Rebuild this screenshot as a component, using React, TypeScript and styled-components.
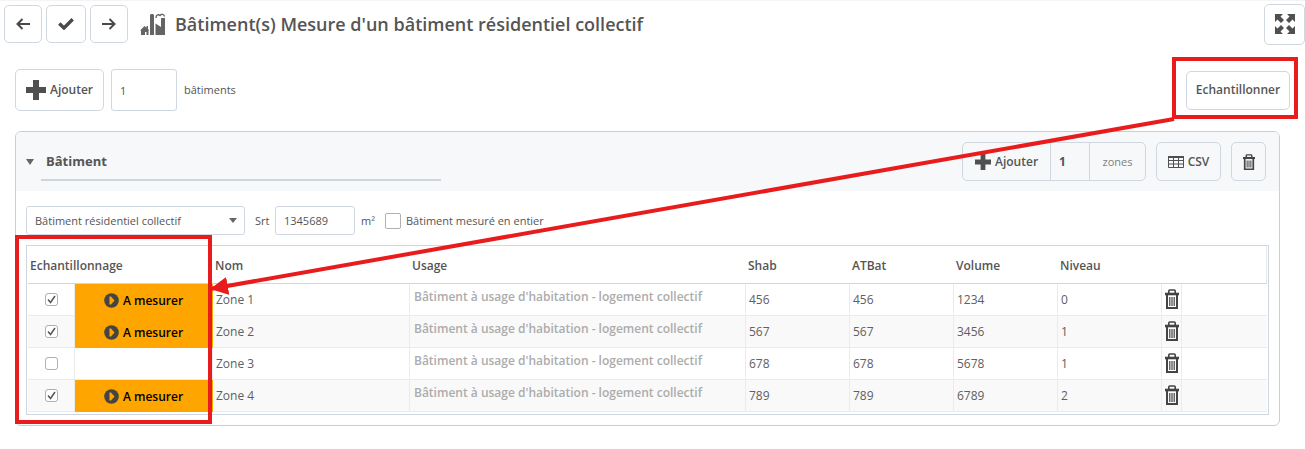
import React from "react";
import styled, { createGlobalStyle, css } from "styled-components";

const RED = "#e81c1c";
const LINE = "#d0d7e0";

const GlobalStyle = createGlobalStyle`
  *, *::before, *::after { box-sizing: border-box; }
  body {
    margin: 0;
    background: #fff;
    color: #555;
    font: 11px/16px "Open Sans", "Noto Sans", sans-serif;
  }
  button, input, select { font: inherit; color: inherit; margin: 0; }
`;

const Page = styled.div`
  position: relative;
  border-top: 1px solid #f4f4f4;
`;

const Header = styled.header`
  display: flex;
  align-items: center;
  gap: 12px;
  height: 46px;
  padding-left: 4px;
`;

const NavButtons = styled.div`
  display: flex;
  gap: 4px;
`;

const Title = styled.h1`
  display: flex;
  align-items: center;
  gap: 9px;
  flex: 1;
  margin: 0;
  font-size: 18px;
  line-height: 24px;
  font-weight: 600;
  color: #555;
`;

const Button = styled.button<{ $w?: number; $h?: number }>`
  display: inline-flex;
  align-items: center;
  justify-content: center;
  gap: 4px;
  flex: none;
  height: ${(p) => p.$h ?? 39}px;
  ${(p) => p.$w && css`width: ${p.$w}px;`}
  padding: 0;
  border: 1px solid ${LINE};
  border-radius: 5px;
  background: transparent;
  font-size: 12px;
  font-weight: 600;
  white-space: nowrap;
`;

const TextInput = styled.input<{ $w: number; $h: number }>`
  width: ${(p) => p.$w}px;
  height: ${(p) => p.$h}px;
  padding: 0 8px;
  border: 1px solid ${LINE};
  border-radius: 3px;
  background: #fff;
`;

const Toolbar = styled.div`
  display: flex;
  align-items: center;
  gap: 7px;
  height: 42px;
  margin: 22px 15px 20px;
`;

const Callout = styled.div`
  position: relative;
  display: flex;
  margin-left: auto;
`;

const CalloutFrame = styled.div<{ $inset: string; $w?: number }>`
  position: absolute;
  inset: ${(p) => p.$inset};
  ${(p) => p.$w && css`width: ${p.$w}px;`}
  border: 4px solid ${RED};
  pointer-events: none;
`;

const Card = styled.section`
  position: relative;
  margin: 0 25px 0 15px;
  border: 1px solid #c9ced4;
  border-radius: 6px;
`;

const CardHeader = styled.div`
  display: flex;
  align-items: center;
  gap: 10px;
  height: 59px;
  padding: 0 13px 0 10px;
  background: #f6f8fa;
  border-radius: 5px 5px 0 0;
`;

const Toggle = styled.button`
  display: flex;
  width: 8px;
  padding: 0;
  border: 0;
  background: none;
`;

const NameInput = styled.input`
  width: 400px;
  height: 39px;
  margin: 0 auto 0 -3px;
  padding: 0 5px;
  border: 0;
  border-bottom: 2px solid #cdd4dd;
  background: none;
  font-size: 13px;
  font-weight: 700;
`;

const Group = styled.div`
  display: flex;
  height: 39px;
  border: 1px solid ${LINE};
  border-radius: 5px;
  overflow: hidden;
`;

const GroupButton = styled.button`
  display: flex;
  align-items: center;
  gap: 4px;
  width: 87px;
  padding: 0 0 0 12px;
  border: 0;
  background: none;
  font-size: 12px;
  font-weight: 600;
`;

const GroupInput = styled.input`
  width: 40px;
  padding: 0 8px;
  border: 1px solid ${LINE};
  border-width: 0 1px;
  background: none;
  font-size: 12px;
  font-weight: 700;
`;

const GroupLabel = styled.label`
  display: flex;
  align-items: center;
  justify-content: center;
  width: 55px;
  color: #808080;
`;

const Filters = styled.div`
  display: flex;
  align-items: center;
  height: 29px;
  margin: 15px 10px 10px;
`;

const SelectBox = styled.div`
  position: relative;
  width: 219px;
  margin-right: 10px;
  svg { position: absolute; right: 8px; top: 12px; pointer-events: none; }
`;

const Select = styled.select`
  appearance: none;
  width: 100%;
  height: 29px;
  padding: 0 8px;
  border: 1px solid ${LINE};
  border-radius: 3px;
  background: #fff;
`;

const FieldLabel = styled.label`
  width: 20px;
`;

const Unit = styled.span`
  width: 30px;
  padding-left: 6px;
`;

const Check = styled.input<{ $size: number }>`
  appearance: none;
  display: block;
  flex: none;
  width: ${(p) => p.$size}px;
  height: ${(p) => p.$size}px;
  border: 1px solid #b0b0b0;
  border-radius: ${(p) => (p.$size > 14 ? 2 : 3)}px;
  background: #fff;
  &:checked {
    background: #fff
      url("data:image/svg+xml,%3Csvg xmlns='http://www.w3.org/2000/svg' viewBox='0 0 11 11'%3E%3Cpath d='M2 5.5 4.5 8.5 9 2' fill='none' stroke='%23555' stroke-width='1.5'/%3E%3C/svg%3E");
  }
  td & { margin: 0 auto; }
`;

const EntireCheck = styled.div`
  display: flex;
  align-items: center;
  gap: 5px;
`;

const TableFrame = styled.div`
  margin: 0 10px 10px;
  padding: 0 1px 2px;
  border: 1px solid ${LINE};
`;

const Table = styled.table`
  width: 100%;
  table-layout: fixed;
  border-collapse: separate;
  border-spacing: 0;
  font-size: 12px;
`;

const Th = styled.th`
  height: 38px;
  padding: 2px 2px 0;
  border-bottom: 1px solid ${LINE};
  text-align: left;
  font-weight: 600;
  &:last-child { border-right: 1px solid #e4e7ec; }
`;

const Row = styled.tr`
  &:nth-child(even) { background: #f9f9f9; }
`;

const Td = styled.td<{ $kind?: "center" | "measure" | "usage" }>`
  height: 32px;
  padding: 0 3px;
  border-bottom: 1px solid #ebebeb;
  border-right: 1px solid #ebebeb;
  color: #606060;
  &:last-child { border-right: 0; }
  ${(p) => p.$kind === "center" && css`padding: 0 0 1px;`}
  ${(p) =>
    p.$kind === "measure" &&
    css`
      padding: 2px 0 0;
      background: #ffa500;
      border-color: #ffa500;
      color: #000;
      font-weight: 600;
    `}
  ${(p) =>
    p.$kind === "usage" &&
    css`
      padding: 0 4px 5px;
      color: #acacac;
      font-weight: 600;
      white-space: nowrap;
    `}
`;

const Measure = styled.span`
  display: flex;
  align-items: center;
  justify-content: center;
  gap: 4px;
`;

const IconButton = styled.button`
  display: flex;
  padding: 0;
  margin: 0 auto;
  border: 0;
  background: none;
`;

const Arrow = styled.svg`
  position: absolute;
  left: 210px;
  top: 118px;
  width: calc(100% - 341px);
  height: 170px;
  overflow: visible;
  pointer-events: none;
`;

const ArrowIcon = ({ flip }: { flip?: boolean }) => (
  <svg width="14" height="12" viewBox="0 0 14 12" fill="none" stroke="#4a4a4a" strokeWidth="2">
    <path d={flip ? "M0 6H12.5M7.5 1l5 5-5 5" : "M14 6H1.5M6.5 1l-5 5 5 5"} />
  </svg>
);

const CheckIcon = () => (
  <svg width="16" height="12" viewBox="0 0 16 12" fill="none" stroke="#4a4a4a" strokeWidth="3.4">
    <path d="M1.3 5.5 6 10 14.7 1.3" />
  </svg>
);

const PlusIcon = ({ size }: { size: number }) => (
  <svg width={size} height={size} viewBox="0 0 20 20" fill="#505050">
    <path d="M7 0h6v7h7v6h-7v7H7v-7H0V7h7z" />
  </svg>
);

const FactoryIcon = () => (
  <svg width="26" height="23" viewBox="0 0 26 23" fill="#646464">
    <path d="M0 17.5 4.5 13l2 1.8V13H8v3l1.2 1.5h-.7V22h-2v-3H5v3H1v-4.5z" />
    <path d="M10 22V2l1-1h2l1 1v20z" />
    <path d="M15.500 22V10.500L21 14V5h4v17z" />
    <path d="M16 5c0-3.500 2.500-4 4-2.500C21.500.5 24 1 24.500 3.500" fill="none" stroke="#646464" strokeWidth="1.4" />
  </svg>
);

const ExpandIcon = () => (
  <svg width="20" height="20" viewBox="0 0 20 20" fill="#505050">
    {[0, 90, 180, 270].map((angle) => (
      <path key={angle} transform={`rotate(${angle} 10 10)`} d="M0 0h8L5.500 2.500l3.500 3.500-3 3-3.500-3.500L0 8z" />
    ))}
  </svg>
);

const TrashIcon = ({ w, h }: { w: number; h: number }) => (
  <svg width={w} height={h} viewBox="0 0 14 20" fill="none" stroke="#444" preserveAspectRatio="none">
    <path d="M3.800 4V2q0-1 1-1h4.400q1 0 1 1v2" strokeWidth="1.6" />
    <path d="M0 5h14" strokeWidth="2.6" />
    <path d="M2 6v13h10V6" strokeWidth="2" />
    <path d="M4.800 8v9M7 8v9M9.200 8v9" strokeWidth="1.2" />
  </svg>
);

const GridIcon = () => (
  <svg width="16" height="12" viewBox="0 0 16 12" fill="none" stroke="#505050">
    <path d="M.5 1v10.500h15V1M0 4.500h16M0 8h16M5.500 1v10.500M10.500 1v10.500" />
    <path d="M0 1h16" strokeWidth="2" />
  </svg>
);

const PlayIcon = () => (
  <svg width="15" height="15" viewBox="0 0 15 15">
    <circle cx="7.5" cy="7.5" r="7.3" fill="#444" />
    <path d="M5.500 3.500H7l3.500 4-3.500 4H5.500z" fill="#ffa500" />
  </svg>
);

const Caret = ({ w, h }: { w: number; h: number }) => (
  <svg width={w} height={h} viewBox="0 0 8 6" preserveAspectRatio="none" fill="#666">
    <path d="M0 0h8L4 6z" />
  </svg>
);

const zones = [
  { name: "Zone 1", shab: 456, atbat: 456, volume: 1234, level: 0, sampled: true },
  { name: "Zone 2", shab: 567, atbat: 567, volume: 3456, level: 1, sampled: true },
  { name: "Zone 3", shab: 678, atbat: 678, volume: 5678, level: 1, sampled: false },
  { name: "Zone 4", shab: 789, atbat: 789, volume: 6789, level: 2, sampled: true },
];

const columnWidths = [47, 138, 197, 336, 104, 104, 104, 104, 20];

export default function App() {
  return (
    <Page>
      <GlobalStyle />
      <Header>
        <NavButtons>
          <Button $w={38} $h={38} aria-label="Précédent"><ArrowIcon /></Button>
          <Button $w={40} $h={38} aria-label="Valider"><CheckIcon /></Button>
          <Button $w={38} $h={38} aria-label="Suivant"><ArrowIcon flip /></Button>
        </NavButtons>
        <Title>
          <FactoryIcon />
          Bâtiment(s) Mesure d'un bâtiment résidentiel collectif
        </Title>
        <Button $w={41} $h={41} aria-label="Plein écran"><ExpandIcon /></Button>
      </Header>

      <Toolbar>
        <Button $w={89} $h={42}><PlusIcon size={20} />Ajouter</Button>
        <TextInput id="buildings" $w={66} $h={42} defaultValue="1" />
        <label htmlFor="buildings">bâtiments</label>
        <Callout>
          <Button $w={104}>Echantillonner</Button>
          <CalloutFrame $inset="-14px -8px -9px -14px" />
        </Callout>
      </Toolbar>

      <Card>
        <CardHeader>
          <Toggle aria-label="Replier"><Caret w={8} h={6} /></Toggle>
          <NameInput aria-label="Nom du bâtiment" defaultValue="Bâtiment" />
          <Group>
            <GroupButton><PlusIcon size={16} />Ajouter</GroupButton>
            <GroupInput id="zones" defaultValue="1" />
            <GroupLabel htmlFor="zones">zones</GroupLabel>
          </Group>
          <Button $w={65}><GridIcon />CSV</Button>
          <Button $w={35} aria-label="Supprimer le bâtiment"><TrashIcon w={12} h={16} /></Button>
        </CardHeader>

        <Filters>
          <SelectBox>
            <Select aria-label="Type de bâtiment">
              <option>Bâtiment résidentiel collectif</option>
            </Select>
            <Caret w={8} h={5} />
          </SelectBox>
          <FieldLabel htmlFor="srt">Srt</FieldLabel>
          <TextInput id="srt" $w={80} $h={29} defaultValue="1345689" />
          <Unit>m²</Unit>
          <EntireCheck>
            <Check id="entire" type="checkbox" $size={16} />
            <label htmlFor="entire">Bâtiment mesuré en entier</label>
          </EntireCheck>
        </Filters>

        <TableFrame>
          <Table>
            <colgroup>
              {columnWidths.map((w, i) => <col key={i} width={w} />)}
              <col />
            </colgroup>
            <thead>
              <tr>
                <Th colSpan={2}>Echantillonnage</Th>
                <Th>Nom</Th>
                <Th>Usage</Th>
                <Th>Shab</Th>
                <Th>ATBat</Th>
                <Th>Volume</Th>
                <Th>Niveau</Th>
                <Th colSpan={2} />
              </tr>
            </thead>
            <tbody>
              {zones.map((z) => (
                <Row key={z.name}>
                  <Td $kind="center">
                    <Check type="checkbox" $size={13} defaultChecked={z.sampled} aria-label={z.name} />
                  </Td>
                  <Td $kind={z.sampled ? "measure" : undefined}>
                    {z.sampled && <Measure><PlayIcon />A mesurer</Measure>}
                  </Td>
                  <Td>{z.name}</Td>
                  <Td $kind="usage">Bâtiment à usage d'habitation - logement collectif</Td>
                  <Td>{z.shab}</Td>
                  <Td>{z.atbat}</Td>
                  <Td>{z.volume}</Td>
                  <Td>{z.level}</Td>
                  <Td $kind="center">
                    <IconButton aria-label={"Supprimer " + z.name}><TrashIcon w={14} h={20} /></IconButton>
                  </Td>
                  <Td />
                </Row>
              ))}
            </tbody>
          </Table>
        </TableFrame>
        <CalloutFrame $inset="103px auto 1px -1px" $w={197} />
      </Card>

      <Arrow>
        <defs>
          <marker id="head" markerUnits="userSpaceOnUse" markerWidth="18" markerHeight="18" refX="0" refY="9" orient="auto">
            <path d="M0 9 18 0V18z" fill={RED} />
          </marker>
        </defs>
        <line x1="0" y1="170" x2="100%" y2="0" stroke={RED} strokeWidth="4" markerStart="url(#head)" />
      </Arrow>
    </Page>
  );
}
